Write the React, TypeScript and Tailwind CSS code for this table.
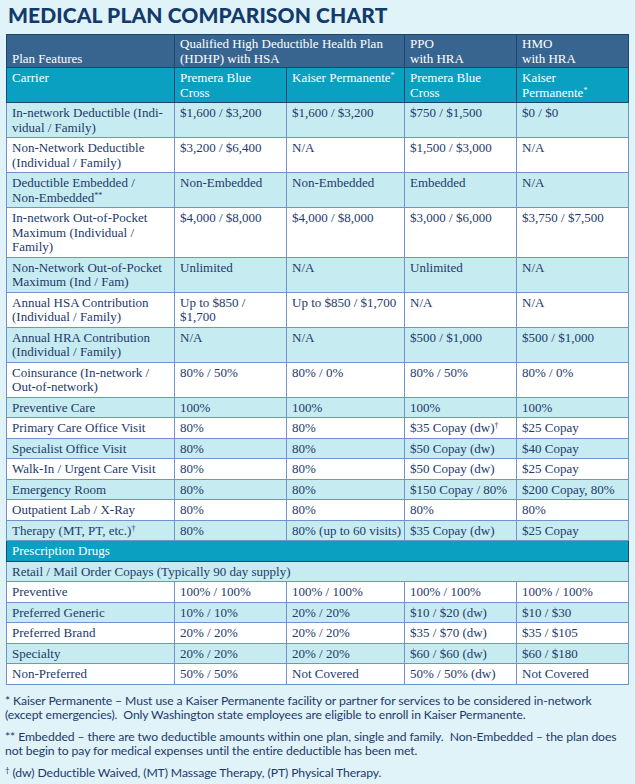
import React from 'react';

type Tone = 'cyan' | 'white';

type Row = {
  label: React.ReactNode;
  cells: React.ReactNode[];
  tone: Tone;
};

const Sup = ({ children }: { children: React.ReactNode }) => (
  <sup className="text-[8px]">{children}</sup>
);

const planRows: Row[] = [
  { label: 'In-network Deductible (Indi-\nvidual / Family)', cells: ['$1,600 / $3,200', '$1,600 / $3,200', '$750 / $1,500', '$0 / $0'], tone: 'cyan' },
  { label: 'Non-Network Deductible\n(Individual / Family)', cells: ['$3,200 / $6,400', 'N/A', '$1,500 / $3,000', 'N/A'], tone: 'white' },
  {
    label: (
      <>
        Deductible Embedded /{'\n'}Non-Embedded<Sup>**</Sup>
      </>
    ),
    cells: ['Non-Embedded', 'Non-Embedded', 'Embedded', 'N/A'],
    tone: 'cyan',
  },
  { label: 'In-network Out-of-Pocket\nMaximum (Individual /\nFamily)', cells: ['$4,000 / $8,000', '$4,000 / $8,000', '$3,000 / $6,000', '$3,750 / $7,500'], tone: 'white' },
  { label: 'Non-Network Out-of-Pocket\nMaximum (Ind / Fam)', cells: ['Unlimited', 'N/A', 'Unlimited', 'N/A'], tone: 'cyan' },
  { label: 'Annual HSA Contribution\n(Individual / Family)', cells: ['Up to $850 /\n$1,700', 'Up to $850 / $1,700', 'N/A', 'N/A'], tone: 'white' },
  { label: 'Annual HRA Contribution\n(Individual / Family)', cells: ['N/A', 'N/A', '$500 / $1,000', '$500 / $1,000'], tone: 'cyan' },
  { label: 'Coinsurance (In-network /\nOut-of-network)', cells: ['80% / 50%', '80% / 0%', '80% / 50%', '80% / 0%'], tone: 'white' },
  { label: 'Preventive Care', cells: ['100%', '100%', '100%', '100%'], tone: 'cyan' },
  {
    label: 'Primary Care Office Visit',
    cells: ['80%', '80%', <>$35 Copay (dw)<Sup>†</Sup></>, '$25 Copay'],
    tone: 'white',
  },
  { label: 'Specialist Office Visit', cells: ['80%', '80%', '$50 Copay (dw)', '$40 Copay'], tone: 'cyan' },
  { label: 'Walk-In / Urgent Care Visit', cells: ['80%', '80%', '$50 Copay (dw)', '$25 Copay'], tone: 'white' },
  { label: 'Emergency Room', cells: ['80%', '80%', '$150 Copay / 80%', '$200 Copay, 80%'], tone: 'cyan' },
  { label: 'Outpatient Lab / X-Ray', cells: ['80%', '80%', '80%', '80%'], tone: 'white' },
  {
    label: <>Therapy (MT, PT, etc.)<Sup>†</Sup></>,
    cells: ['80%', '80% (up to 60 visits)', '$35 Copay (dw)', '$25 Copay'],
    tone: 'cyan',
  },
];

const drugRows: Row[] = [
  { label: 'Preventive', cells: ['100% / 100%', '100% / 100%', '100% / 100%', '100% / 100%'], tone: 'white' },
  { label: 'Preferred Generic', cells: ['10% / 10%', '20% / 20%', '$10 / $20 (dw)', '$10 / $30'], tone: 'cyan' },
  { label: 'Preferred Brand', cells: ['20% / 20%', '20% / 20%', '$35 / $70 (dw)', '$35 / $105'], tone: 'white' },
  { label: 'Specialty', cells: ['20% / 20%', '20% / 20%', '$60 / $60 (dw)', '$60 / $180'], tone: 'cyan' },
  { label: 'Non-Preferred', cells: ['50% / 50%', 'Not Covered', '50% / 50% (dw)', 'Not Covered'], tone: 'white' },
];

const cell = 'border border-[#6f93d1] pl-[5px] pr-[1px] pt-[3px] pb-[2px] align-top whitespace-pre-line';
const headCell = 'border border-[#1d466f] pl-[5px] pr-[1px] pt-[3px] pb-[2px] align-top whitespace-pre-line';
const topCell = 'border border-[#1d466f] pl-[5px] pr-[1px] pt-[2px] pb-[1px] text-left font-normal whitespace-pre-line';

function BodyRow({ row }: { row: Row }) {
  const bg = row.tone === 'cyan' ? 'bg-[#c6ebf1]' : 'bg-white';
  return (
    <tr className={bg}>
      <td className={cell}>{row.label}</td>
      {row.cells.map((c, i) => (
        <td key={i} className={cell}>
          {c}
        </td>
      ))}
    </tr>
  );
}

export default function App() {
  return (
    <div className="w-[635px] h-[784px] bg-[#e0f3f8] text-[#1d3a6a] overflow-hidden">
      <div className="h-[34px] pl-[8px] pt-[1px]">
        <h1
          className="text-[21px] leading-[28px] font-black tracking-[0.005em] text-[#133a6a]"
          style={{ fontFamily: 'Lato, "Open Sans", sans-serif' }}
        >
          MEDICAL PLAN COMPARISON CHART
        </h1>
      </div>

      <div className="pl-[6px]">
        <table
          className="w-[622px] table-fixed border-collapse text-[13px] leading-[14.5px]"
          style={{ fontFamily: '"Liberation Serif", "Times New Roman", serif' }}
        >
          <colgroup>
            <col className="w-[168px]" />
            <col className="w-[112px]" />
            <col className="w-[118px]" />
            <col className="w-[112px]" />
            <col className="w-[112px]" />
          </colgroup>
          <thead>
            <tr className="bg-[#386590] text-white">
              <th className={`${topCell} align-bottom`}>Plan Features</th>
              <th colSpan={2} className={`${topCell} align-top`}>
                {'Qualified High Deductible Health Plan\n(HDHP) with HSA'}
              </th>
              <th className={`${topCell} align-top`}>{'PPO\nwith HRA'}</th>
              <th className={`${topCell} align-top`}>{'HMO\nwith HRA'}</th>
            </tr>
          </thead>
          <tbody>
            <tr className="bg-[#0aa0c1] text-white">
              <td className={headCell}>Carrier</td>
              <td className={headCell}>{'Premera Blue\nCross'}</td>
              <td className={headCell}>
                Kaiser Permanente<Sup>*</Sup>
              </td>
              <td className={headCell}>{'Premera Blue\nCross'}</td>
              <td className={headCell}>
                {'Kaiser\nPermanente'}
                <Sup>*</Sup>
              </td>
            </tr>
            {planRows.map((r, i) => (
              <BodyRow key={i} row={r} />
            ))}
            <tr className="bg-[#0aa0c1] text-white">
              <td colSpan={5} className="border border-[#1d466f] px-[5px] pt-[3px] pb-[2px]">
                Prescription Drugs
              </td>
            </tr>
            <tr className="bg-[#c6ebf1]">
              <td colSpan={5} className={cell}>
                Retail / Mail Order Copays (Typically 90 day supply)
              </td>
            </tr>
            {drugRows.map((r, i) => (
              <BodyRow key={i} row={r} />
            ))}
          </tbody>
        </table>
      </div>

      <div
        className="pl-[5px] pt-[9px] text-[12.2px] leading-[14.5px] tracking-[-0.1px] whitespace-nowrap text-[#1d3a6a] flex flex-col gap-[7px]"
        style={{ fontFamily: 'Lato, "Open Sans", sans-serif' }}
      >
        <p>
          * Kaiser Permanente – Must use a Kaiser Permanente facility or partner for services to be considered in-network
          <br />
          (except emergencies).&nbsp; Only Washington state employees are eligible to enroll in Kaiser Permanente.
        </p>
        <p>
          ** Embedded – there are two deductible amounts within one plan, single and family.&nbsp; Non-Embedded – the plan does
          <br />
          not begin to pay for medical expenses until the entire deductible has been met.
        </p>
        <p>
          <Sup>†</Sup> (dw) Deductible Waived, (MT) Massage Therapy, (PT) Physical Therapy.
        </p>
      </div>
    </div>
  );
}
